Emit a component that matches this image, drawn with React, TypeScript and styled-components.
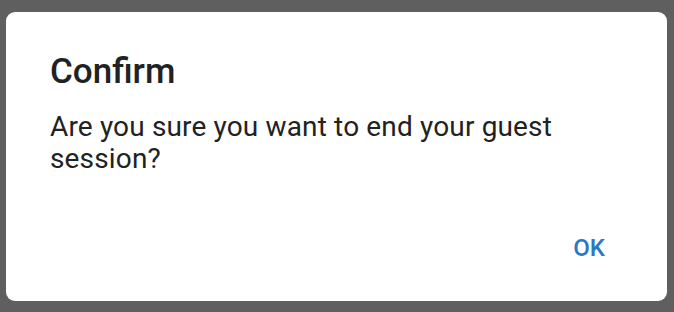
import React from "react";
import styled, { createGlobalStyle } from "styled-components";

const GlobalStyle = createGlobalStyle`
  html, body {
    margin: 0;
    padding: 0;
    background: #5f5f5f;
  }
  body {
    font-family: Roboto, "Noto Sans", "Liberation Sans", sans-serif;
  }
`;

const Backdrop = styled.div`
  width: 674px;
  height: 312px;
  box-sizing: border-box;
  padding: 12px 7px 11px 6px;
  background: #5f5f5f;
`;

const Dialog = styled.div`
  height: 100%;
  box-sizing: border-box;
  background: #ffffff;
  border-radius: 9px;
  padding: 39px 44px 0 44px;
  display: flex;
  flex-direction: column;
`;

const Title = styled.h2`
  margin: 0;
  font-family: "Roboto Medium", Roboto, "Noto Sans", sans-serif;
  font-size: 35px;
  line-height: 41px;
  font-weight: 500;
  color: #222222;
`;

const Message = styled.p`
  margin: 19px 0 0 0;
  font-size: 28px;
  line-height: 32px;
  letter-spacing: 0.15px;
  font-weight: 400;
  color: #222222;
`;

const Actions = styled.div`
  display: flex;
  justify-content: flex-end;
  margin-top: 57px;
  margin-right: 18px;
`;

const TextButton = styled.button`
  border: none;
  background: transparent;
  padding: 0;
  font-family: "Roboto Medium", Roboto, "Noto Sans", sans-serif;
  font-size: 24px;
  line-height: 32px;
  font-weight: 500;
  color: #2b78c2;
  cursor: pointer;
`;

export default function App() {
  return (
    <>
      <GlobalStyle />
      <Backdrop>
        <Dialog>
          <Title>Confirm</Title>
          <Message>Are you sure you want to end your guest session?</Message>
          <Actions>
            <TextButton>OK</TextButton>
          </Actions>
        </Dialog>
      </Backdrop>
    </>
  );
}
